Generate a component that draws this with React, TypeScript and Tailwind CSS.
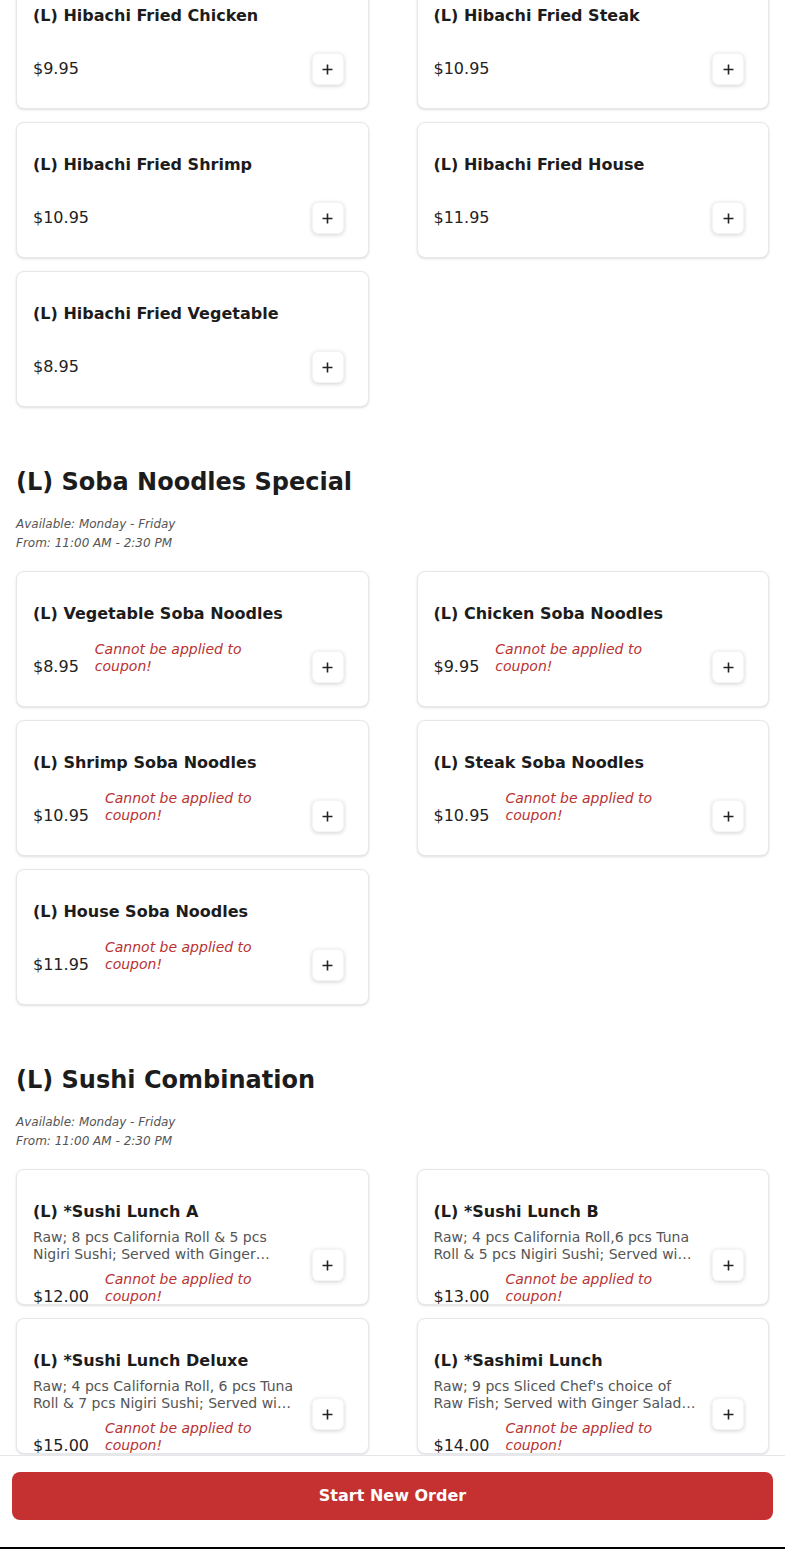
import React from "react";

type Item = {
  name: string;
  price: string;
  desc?: string;
  noCoupon?: boolean;
};

type Section = {
  title?: string;
  items: Item[];
};

const sections: Section[] = [
  {
    items: [
      { name: "(L) Hibachi Fried Chicken", price: "$9.95" },
      { name: "(L) Hibachi Fried Steak", price: "$10.95" },
      { name: "(L) Hibachi Fried Shrimp", price: "$10.95" },
      { name: "(L) Hibachi Fried House", price: "$11.95" },
      { name: "(L) Hibachi Fried Vegetable", price: "$8.95" },
    ],
  },
  {
    title: "(L) Soba Noodles Special",
    items: [
      { name: "(L) Vegetable Soba Noodles", price: "$8.95", noCoupon: true },
      { name: "(L) Chicken Soba Noodles", price: "$9.95", noCoupon: true },
      { name: "(L) Shrimp Soba Noodles", price: "$10.95", noCoupon: true },
      { name: "(L) Steak Soba Noodles", price: "$10.95", noCoupon: true },
      { name: "(L) House Soba Noodles", price: "$11.95", noCoupon: true },
    ],
  },
  {
    title: "(L) Sushi Combination",
    items: [
      {
        name: "(L) *Sushi Lunch A",
        price: "$12.00",
        desc: "Raw; 8 pcs California Roll & 5 pcs Nigiri Sushi; Served with Ginger Salad & Miso Soup",
        noCoupon: true,
      },
      {
        name: "(L) *Sushi Lunch B",
        price: "$13.00",
        desc: "Raw; 4 pcs California Roll,6 pcs Tuna Roll & 5 pcs Nigiri Sushi; Served with Ginger Salad & Miso Soup",
        noCoupon: true,
      },
      {
        name: "(L) *Sushi Lunch Deluxe",
        price: "$15.00",
        desc: "Raw; 4 pcs California Roll, 6 pcs Tuna Roll & 7 pcs Nigiri Sushi; Served with Ginger Salad & Miso Soup",
        noCoupon: true,
      },
      {
        name: "(L) *Sashimi Lunch",
        price: "$14.00",
        desc: "Raw; 9 pcs Sliced Chef's choice of Raw Fish; Served with Ginger Salad & Miso Soup",
        noCoupon: true,
      },
    ],
  },
];

function MenuCard({ item }: { item: Item }) {
  return (
    <div className="flex h-[136px] gap-4 overflow-hidden rounded-lg border border-gray-200 bg-white pl-4 pr-6 shadow-sm">
      <div className="flex min-w-0 flex-1 flex-col pt-[30px] pb-[31px]">
        <h3 className="shrink-0 text-[16px] font-bold leading-6 text-[#1c1c1c]">
          {item.name}
        </h3>
        {item.desc && (
          <p className="mt-[5px] mb-2 line-clamp-2 shrink-0 text-[14px] leading-[17px] text-[#555]">
            {item.desc}
          </p>
        )}
        <div className="mt-auto flex shrink-0 items-end">
          <span className="shrink-0 text-[16px] leading-[17px] text-[#222]">
            {item.price}
          </span>
          {item.noCoupon && (
            <span className="ml-4 text-[14px] italic leading-[17px] text-[#b83232]">
              Cannot be applied to coupon!
            </span>
          )}
        </div>
      </div>
      <button className="mb-[23px] flex h-8 w-8 shrink-0 items-center justify-center self-end rounded-md border border-gray-100 bg-white text-[#222] shadow-[0_1px_4px_rgba(0,0,0,0.18)]">
        <svg width="11" height="11" viewBox="0 0 11 11">
          <path d="M5.5 0.5v10M0.5 5.5h10" stroke="currentColor" strokeWidth="1.6" />
        </svg>
      </button>
    </div>
  );
}

export default function App() {
  return (
    <div
      className="relative h-[1549px] overflow-hidden bg-white"
      style={{ fontFamily: '"DejaVu Sans", sans-serif' }}
    >
      <div className="-mt-[27px] px-4">
        {sections.map((section, i) => (
          <section key={i} className={i > 0 ? "mt-[57px]" : ""}>
            {section.title && (
              <div className="mb-[18px]">
                <h2 className="text-[24px] font-bold leading-9 text-[#1c1c1c]">
                  {section.title}
                </h2>
                <div className="mt-[15px] text-[12px] italic leading-[19px] text-[#555]">
                  <p>Available: Monday - Friday</p>
                  <p>From: 11:00 AM - 2:30 PM</p>
                </div>
              </div>
            )}
            <div className="grid grid-cols-2 gap-x-12 gap-y-[13px]">
              {section.items.map((item) => (
                <MenuCard key={item.name} item={item} />
              ))}
            </div>
          </section>
        ))}
      </div>

      <div className="fixed inset-x-0 bottom-0 border-t border-gray-200 bg-white">
        <div className="px-3 pt-4 pb-[27px]">
          <button className="h-12 w-full rounded-lg bg-[#c53030] text-[16px] font-bold text-white">
            Start New Order
          </button>
        </div>
        <div className="h-[2px] bg-black" />
      </div>
    </div>
  );
}
